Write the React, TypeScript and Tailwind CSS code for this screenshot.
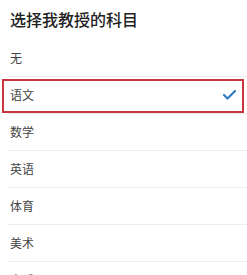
const subjects = ['无', '语文', '数学', '英语', '体育', '美术', '音乐'];

export default function App() {
  const selected = '语文';

  return (
    <div
      className="w-[247px] h-[275px] overflow-hidden bg-white"
      style={{ fontFamily: '"Noto Sans CJK SC", "Noto Sans", sans-serif' }}
    >
      <div className="h-[40px] pl-[10px] pt-[8px] text-[16px] leading-[22px] text-[#222] font-medium">
        选择我教授的科目
      </div>
      <ul>
        {subjects.map(s => (
          <li key={s} className="relative">
            <div className="ml-[8px] h-[37px] border-b border-[#ececec] flex items-center justify-between pl-[2px] pr-[10px]">
              <span className="text-[12px] text-[#444]">{s}</span>
              {s === selected && (
                <svg width="13" height="10" viewBox="0 0 13 10" className="mr-[1px]">
                  <path d="M1 5 L4.5 8.5 L12 1" fill="none" stroke="#2f7fc6" strokeWidth="2.2" strokeLinecap="round" strokeLinejoin="round" />
                </svg>
              )}
            </div>
            {s === selected && (
              <div className="absolute top-[2px] bottom-[1px] left-[2px] right-[3px] border-2 border-[#c8353f]" />
            )}
          </li>
        ))}
      </ul>
    </div>
  );
}
